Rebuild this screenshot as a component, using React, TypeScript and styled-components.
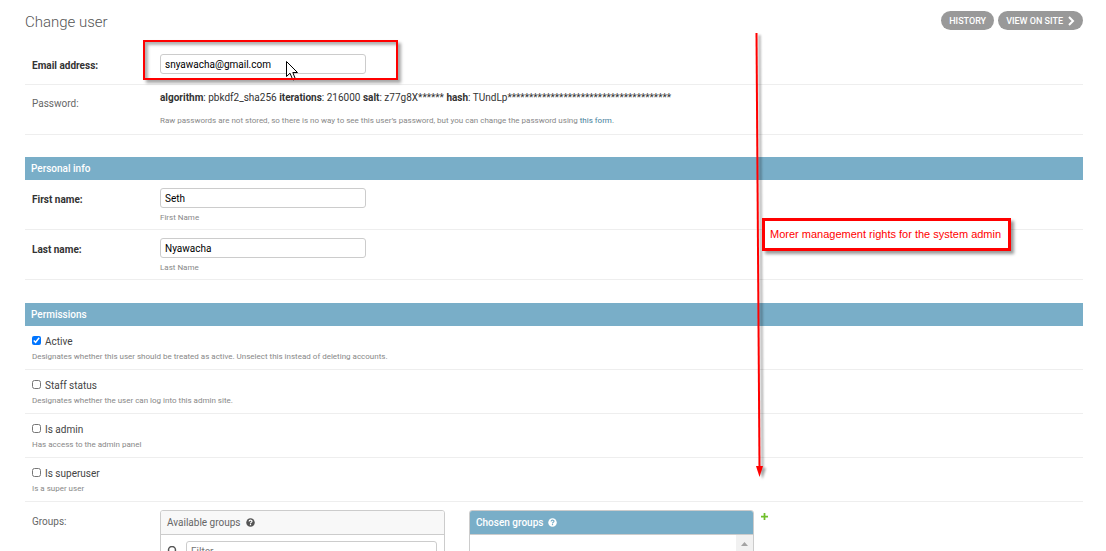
import React from "react";
import styled, { createGlobalStyle, css } from "styled-components";

const GlobalStyle = createGlobalStyle`
  html { scrollbar-width: none; overflow-x: hidden; }
  * { box-sizing: border-box; }
  body {
    margin: 0;
    background: #fff;
    color: #333;
    font-family: Roboto, "Liberation Sans", sans-serif;
    font-size: 10px;
    line-height: 12px;
  }
`;

const Page = styled.div`
  position: relative;
  padding: 11px 23px 24px 25px;
`;

const Header = styled.header`
  display: flex;
  justify-content: space-between;
  height: 32px;
`;

const Title = styled.h1`
  margin: 0;
  font-size: 15px;
  line-height: 22px;
  font-weight: 300;
  color: #555;
`;

const Tools = styled.nav`
  display: flex;
  gap: 4px;
`;

const ToolLink = styled.a`
  display: flex;
  align-items: center;
  gap: 3px;
  height: 19px;
  padding: 0 8px;
  border-radius: 10px;
  background: #999;
  color: #fff;
  font-size: 9px;
  font-weight: 500;
  text-transform: uppercase;
  text-decoration: none;
`;

const Module = styled.fieldset<{ $gap?: number }>`
  min-width: 0;
  margin: 0 0 ${(p) => p.$gap ?? 23}px;
  padding: 0;
  border: 0;
`;

const ModuleTitle = styled.h2`
  margin: 0;
  height: 23px;
  padding: 0 6px;
  background: #79aec8;
  color: #fff;
  font-size: 10px;
  line-height: 23px;
  font-weight: 500;
`;

const Row = styled.div<{ $height?: number; $top?: number }>`
  display: flex;
  min-height: ${(p) => p.$height ?? 50}px;
  padding: ${(p) => p.$top ?? 8}px 7px 0;
  border-bottom: 1px solid #eee;
`;

const labelText = css<{ $required?: boolean }>`
  width: 128px;
  flex: none;
  padding-top: 6px;
  font-weight: ${(p) => (p.$required ? 700 : 400)};
  color: ${(p) => (p.$required ? "#333" : "#666")};
`;

const Label = styled.label<{ $required?: boolean }>`
  ${labelText}
`;

const LabelText = styled.div`
  ${labelText}
`;

const Field = styled.div`
  flex: 1;
  min-width: 0;
`;

const TextInput = styled.input`
  display: block;
  width: 206px;
  height: 20px;
  padding: 0 4px;
  border: 1px solid #ccc;
  border-radius: 3px;
  background: #fff;
  color: #000;
  font: 10px Roboto, "Liberation Sans", sans-serif;
`;

const Help = styled.p`
  margin: 0;
  padding-top: 4px;
  font-size: 8px;
  line-height: 10px;
  color: #888;
`;

const FieldHelp = styled(Help)`
  padding-top: 5px;
`;

const Hash = styled.p`
  margin: 0;
  padding-bottom: 8px;
  strong { font-weight: 700; }
`;

const TextLink = styled.a`
  color: #447e9b;
  text-decoration: none;
`;

const CheckRow = styled.div`
  height: 44px;
  padding: 10px 7px 0;
  border-bottom: 1px solid #eee;
`;

const CheckLine = styled.div`
  display: flex;
  align-items: flex-start;
  gap: 4px;
  color: #444;
`;

const CheckBox = styled.input`
  width: 9px;
  height: 9px;
  margin: 0;
`;

const Selector = styled.div`
  display: flex;
  align-items: flex-start;
  flex-wrap: wrap;
  gap: 24px;
`;

const Box = styled.section`
  width: 285px;
  height: 190px;
  overflow: hidden;
  border: 1px solid #ccc;
  border-radius: 3px;
`;

const BoxTitle = styled.h3<{ $chosen?: boolean }>`
  display: flex;
  align-items: center;
  gap: 5px;
  height: 24px;
  margin: 0;
  padding: 0 6px;
  border-bottom: 1px solid #ccc;
  background: ${(p) => (p.$chosen ? "#79aec8" : "#f8f8f8")};
  color: ${(p) => (p.$chosen ? "#fff" : "#666")};
  font-size: 10px;
  font-weight: ${(p) => (p.$chosen ? 500 : 400)};
`;

const FilterLine = styled.label`
  display: flex;
  align-items: center;
  gap: 9px;
  padding: 6px 7px 6px 6px;
`;

const FilterInput = styled(TextInput)`
  flex: 1;
  width: auto;
  &::placeholder { color: #757575; }
`;

const ListArea = styled.div`
  display: flex;
  height: 166px;
`;

const List = styled.select`
  flex: 1;
  height: 100%;
  border: 0;
  outline: 0;
`;

const Track = styled.div`
  width: 17px;
  padding-top: 7px;
  background: #f1f1f1;
  svg { display: block; margin: 0 auto; }
`;

const ChosenGroup = styled.div`
  display: flex;
  align-items: flex-start;
  gap: 7px;
`;

const AddLink = styled.a`
  display: flex;
  padding-top: 3px;
`;

const EmailHighlight = styled.div`
  position: absolute;
  left: 143px;
  top: 40px;
  width: 255px;
  height: 40px;
  border: 2px solid #f00;
  box-shadow: 3px 3px 3px rgba(0, 0, 0, 0.35), inset 3px 3px 3px rgba(0, 0, 0, 0.3);
  pointer-events: none;
`;

const Arrow = styled.svg`
  position: absolute;
  left: 740px;
  top: 28px;
  pointer-events: none;
  filter: drop-shadow(3px 2px 1px rgba(0, 0, 0, 0.35));
`;

const Pointer = styled.svg`
  position: absolute;
  left: 286px;
  top: 60px;
  pointer-events: none;
`;

const Note = styled.div`
  position: absolute;
  left: 762px;
  top: 218px;
  height: 33px;
  padding: 0 7px 0 5px;
  border: 3px solid #f00;
  background: #fff;
  box-shadow: 3px 3px 3px rgba(0, 0, 0, 0.4);
  color: #f00;
  font-family: "Liberation Sans", Arial, sans-serif;
  font-size: 11px;
  line-height: 27px;
  white-space: nowrap;
`;

const HelpIcon = ({ fill, mark }: { fill: string; mark: string }) => (
  <svg width="9" height="9" viewBox="0 0 18 18" aria-hidden="true">
    <circle cx="9" cy="9" r="8.5" fill={fill} />
    <path d="M6.2 7c0-3.8 5.8-3.5 5.8-.3 0 2-3 2-3 4.2" fill="none" stroke={mark} strokeWidth="2.3" />
    <rect x="7.8" y="12" width="2.4" height="2.4" fill={mark} />
  </svg>
);

const checks = [
  { id: "active", label: "Active", on: true, help: "Designates whether this user should be treated as active. Unselect this instead of deleting accounts." },
  { id: "staff", label: "Staff status", help: "Designates whether the user can log into this admin site." },
  { id: "admin", label: "Is admin", help: "Has access to the admin panel" },
  { id: "superuser", label: "Is superuser", help: "Is a super user" },
];

export default function App() {
  return (
    <Page>
      <GlobalStyle />
      <Header>
        <Title>Change user</Title>
        <Tools>
          <ToolLink href="#history">History</ToolLink>
          <ToolLink href="#site">
            View on site
            <svg width="9" height="10" viewBox="0 0 9 10" aria-hidden="true">
              <path d="M3 1l4 4-4 4" fill="none" stroke="#fff" strokeWidth="2" />
            </svg>
          </ToolLink>
        </Tools>
      </Header>

      <Module $gap={22}>
        <Row $height={42} $top={11}>
          <Label htmlFor="email" $required>Email address:</Label>
          <Field><TextInput id="email" type="email" defaultValue="snyawacha@gmail.com" /></Field>
        </Row>
        <Row $top={7}>
          <LabelText>Password:</LabelText>
          <Field>
            <Hash>
              <strong>algorithm</strong>: pbkdf2_sha256 <strong>iterations</strong>: 216000 <strong>salt</strong>: z77g8X******{" "}
              <strong>hash</strong>: TUndLp**************************************
            </Hash>
            <Help>
              Raw passwords are not stored, so there is no way to see this user’s password, but you can change the password using{" "}
              <TextLink href="#password">this form</TextLink>.
            </Help>
          </Field>
        </Row>
      </Module>

      <Module>
        <ModuleTitle>Personal info</ModuleTitle>
        <Row>
          <Label htmlFor="first" $required>First name:</Label>
          <Field><TextInput id="first" defaultValue="Seth" /><FieldHelp>First Name</FieldHelp></Field>
        </Row>
        <Row>
          <Label htmlFor="last" $required>Last name:</Label>
          <Field><TextInput id="last" defaultValue="Nyawacha" /><FieldHelp>Last Name</FieldHelp></Field>
        </Row>
      </Module>

      <Module>
        <ModuleTitle>Permissions</ModuleTitle>
        {checks.map((c) => (
          <CheckRow key={c.id}>
            <CheckLine>
              <CheckBox id={c.id} type="checkbox" defaultChecked={c.on} />
              <label htmlFor={c.id}>{c.label}</label>
            </CheckLine>
            <Help>{c.help}</Help>
          </CheckRow>
        ))}
        <Row>
          <LabelText>Groups:</LabelText>
          <Selector>
            <Box>
              <BoxTitle>Available groups <HelpIcon fill="#555" mark="#fff" /></BoxTitle>
              <FilterLine>
                <svg width="10" height="10" viewBox="0 0 10 10" aria-hidden="true">
                  <circle cx="5" cy="4" r="3.500" fill="none" stroke="#555" strokeWidth="1.500" />
                  <path d="M7 6l3 3" stroke="#555" strokeWidth="2" />
                </svg>
                <FilterInput placeholder="Filter" aria-label="Filter" />
              </FilterLine>
            </Box>
            <ChosenGroup>
              <Box>
                <BoxTitle $chosen>Chosen groups <HelpIcon fill="#fff" mark="#79aec8" /></BoxTitle>
                <ListArea>
                  <List multiple aria-label="Chosen groups" />
                  <Track>
                    <svg width="7" height="4" viewBox="0 0 7 4" aria-hidden="true"><path d="M0 4l3.5-4L7 4z" fill="#a3a3a3" /></svg>
                  </Track>
                </ListArea>
              </Box>
              <AddLink href="#add" aria-label="Add group">
                <svg width="7" height="7" viewBox="0 0 8 8" aria-hidden="true"><path d="M3 0h2v3h3v2H5v3H3V5H0V3h3z" fill="#70bf2b" /></svg>
              </AddLink>
            </ChosenGroup>
          </Selector>
        </Row>
      </Module>

      <Pointer width="14" height="22" viewBox="0 0 14 22" aria-hidden="true">
        <path d="M.5 1.5v15l3.5-3.3 2.7 6.3q1.3 1.5 2.5-1L6.8 12.5H11.5z" fill="#fff" stroke="#000" />
      </Pointer>
      <EmailHighlight />
      <Arrow width="40" height="460" viewBox="0 0 40 460" aria-hidden="true">
        <path d="M16.5 5L19.5 440" stroke="#f00" strokeWidth="2" />
        <path d="M16 438h7l-3.5 11z" fill="#f00" />
      </Arrow>
      <Note>Morer management rights for the system admin</Note>
    </Page>
  );
}
